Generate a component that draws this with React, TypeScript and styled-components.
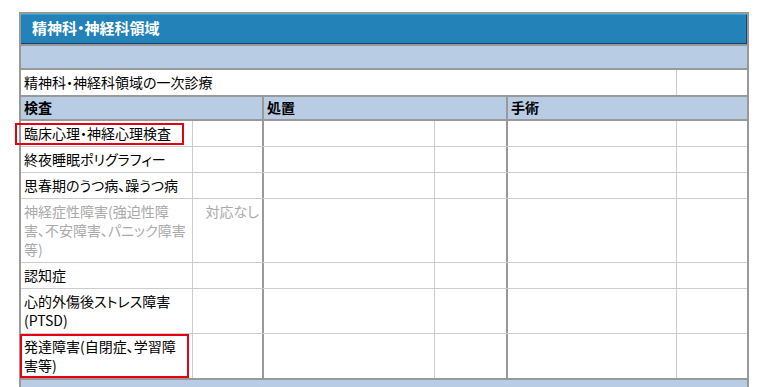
import React from "react";
import styled, { createGlobalStyle } from "styled-components";

const Global = createGlobalStyle`
  html, body { margin: 0; padding: 0; background: #fff; }
  body {
    font-family: "Noto Sans CJK JP", "Noto Sans", sans-serif;
    font-feature-settings: "palt";
    color: #000;
  }
  *, *::before, *::after { box-sizing: border-box; }
`;

const Page = styled.div`
  padding: 12px 0 0 19px;
  height: 387px;
  overflow: hidden;
`;

const Panel = styled.div`
  width: 730px;
  border: 2px solid #999;
  border-bottom: none;
  background: #fff;
`;

const TitleBar = styled.div`
  height: 32px;
  display: flex;
  align-items: center;
  padding: 0 0 2px 11px;
  background: #2382b7;
  border-bottom: 2px solid #999;
  box-shadow: inset 0 1px 0 #2aa6da, inset 0 -1px 0 #14416e, inset -1px 0 0 #14416e;
  color: #fff;
  font-size: 15px;
  font-weight: bold;
  line-height: 18px;
`;

const Band = styled.div<{ $h: number }>`
  height: ${(p) => p.$h}px;
  background: #b8cde4;
  border-bottom: 2px solid #999;
`;

const IntroRow = styled.div`
  display: grid;
  grid-template-columns: 656px 70px;
  height: 27px;
  border-bottom: 2px solid #999;
`;

const IntroCell = styled.div<{ $divider?: boolean }>`
  padding: 3px 3px;
  font-size: 14px;
  line-height: 19px;
  white-space: nowrap;
  border-right: ${(p) => (p.$divider ? "1px solid #ccc" : "none")};
`;

const HeadRow = styled.div`
  display: grid;
  grid-template-columns: 243px 244px 239px;
  height: 24px;
  background: #b8cde4;
  border-bottom: 2px solid #999;
`;

const HeadCell = styled.div<{ $last?: boolean }>`
  padding: 0 3px;
  font-size: 14px;
  font-weight: bold;
  line-height: 21px;
  border-right: ${(p) => (p.$last ? "none" : "2px solid #999")};
`;

const DataRow = styled.div<{ $last?: boolean }>`
  display: grid;
  grid-template-columns: 172px 71px 171px 73px 169px 70px;
  border-bottom: ${(p) => (p.$last ? "2px solid #999" : "1px solid #ccc")};
`;

type Edge = "sub" | "group" | "none";

const Cell = styled.div<{ $edge: Edge; $muted?: boolean; $align?: "left" | "right" }>`
  position: relative;
  padding: 3px ${(p) => (p.$align === "right" ? "3px" : "3px")} 3px 3px;
  font-size: 14px;
  line-height: 19px;
  white-space: nowrap;
  text-align: ${(p) => p.$align ?? "left"};
  color: ${(p) => (p.$muted ? "#a9a9a9" : "#000")};
  border-right: ${(p) =>
    p.$edge === "sub" ? "1px solid #ccc" : p.$edge === "group" ? "2px solid #999" : "none"};
`;

const Highlight = styled.div<{ $l: number; $t: number; $w: number; $h: number }>`
  position: absolute;
  left: ${(p) => p.$l}px;
  top: ${(p) => p.$t}px;
  width: ${(p) => p.$w}px;
  height: ${(p) => p.$h}px;
  border: 2px solid #e60012;
  pointer-events: none;
`;

type Mark = { l: number; t: number; w: number; h: number };
type Row = { label: string[]; note?: string; muted?: boolean; mark?: Mark };

const rows: Row[] = [
  { label: ["臨床心理・神経心理検査"], mark: { l: -6, t: 2, w: 169, h: 22 } },
  { label: ["終夜睡眠ポリグラフィー"] },
  { label: ["思春期のうつ病、躁うつ病"] },
  {
    label: ["神経症性障害(強迫性障", "害、不安障害、パニック障害", "等)"],
    note: "対応なし",
    muted: true,
  },
  { label: ["認知症"] },
  { label: ["心的外傷後ストレス障害", "(PTSD)"] },
  { label: ["発達障害(自閉症、学習障", "害等)"], mark: { l: -1, t: 0, w: 169, h: 44 } },
];

const edges: Edge[] = ["sub", "group", "sub", "group", "sub", "none"];

export default function App() {
  return (
    <>
      <Global />
      <Page>
        <Panel>
          <TitleBar>精神科・神経科領域</TitleBar>
          <Band $h={24} />
          <IntroRow>
            <IntroCell $divider>精神科・神経科領域の一次診療</IntroCell>
            <IntroCell />
          </IntroRow>
          <HeadRow>
            <HeadCell>検査</HeadCell>
            <HeadCell>処置</HeadCell>
            <HeadCell $last>手術</HeadCell>
          </HeadRow>
          {rows.map((r, i) => (
            <DataRow key={i} $last={i === rows.length - 1}>
              {edges.map((e, c) => {
                if (c === 0) {
                  return (
                    <Cell key={c} $edge={e} $muted={r.muted}>
                      {r.label.map((line, k) => (
                        <React.Fragment key={k}>
                          {k > 0 && <br />}
                          {line}
                        </React.Fragment>
                      ))}
                      {r.mark && (
                        <Highlight $l={r.mark.l} $t={r.mark.t} $w={r.mark.w} $h={r.mark.h} />
                      )}
                    </Cell>
                  );
                }
                if (c === 1) {
                  return (
                    <Cell key={c} $edge={e} $muted={r.muted} $align="right">
                      {r.note ?? ""}
                    </Cell>
                  );
                }
                return <Cell key={c} $edge={e} />;
              })}
            </DataRow>
          ))}
          <Band $h={24} />
        </Panel>
      </Page>
    </>
  );
}
